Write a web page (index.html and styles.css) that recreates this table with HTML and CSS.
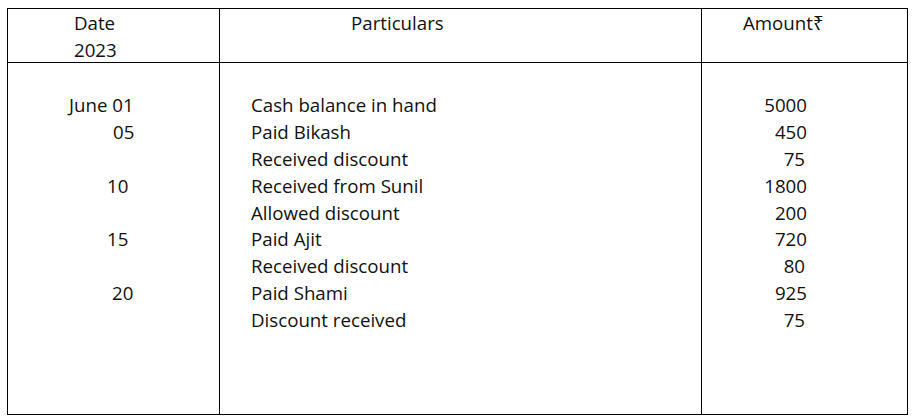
FILE: index.html
```html
<!DOCTYPE html>
<html lang="en">
<head>
<meta charset="utf-8">
<title>Cash Book</title>
<link rel="stylesheet" href="styles.css">
</head>
<body>
<div class="ledger">
  <div class="cell head date-col">
    <div class="line">Date</div>
    <div class="line">2023</div>
  </div>
  <div class="cell head part-col">
    <div class="line">Particulars</div>
  </div>
  <div class="cell head amt-col">
    <div class="line">Amount₹</div>
  </div>

  <div class="cell body date-col">
    <div class="line d-first">June 01</div>
    <div class="line d-05">05</div>
    <div class="line">&nbsp;</div>
    <div class="line d-mid">10</div>
    <div class="line">&nbsp;</div>
    <div class="line d-mid">15</div>
    <div class="line">&nbsp;</div>
    <div class="line d-20">20</div>
  </div>
  <div class="cell body part-col">
    <div class="line">Cash balance in hand</div>
    <div class="line">Paid Bikash</div>
    <div class="line">Received discount</div>
    <div class="line">Received from Sunil</div>
    <div class="line">Allowed discount</div>
    <div class="line">Paid Ajit</div>
    <div class="line">Received discount</div>
    <div class="line">Paid Shami</div>
    <div class="line">Discount received</div>
  </div>
  <div class="cell body amt-col">
    <div class="line num">5000</div>
    <div class="line num">450</div>
    <div class="line num n-short">75</div>
    <div class="line num">1800</div>
    <div class="line num">200</div>
    <div class="line num">720</div>
    <div class="line num n-short">80</div>
    <div class="line num">925</div>
    <div class="line num n-short">75</div>
  </div>
</div>
</body>
</html>
```

FILE: styles.css
```css
html, body {
  margin: 0;
  padding: 0;
  background: #ffffff;
}

body {
  padding: 8px 0 0 7px;
  font-family: "Open Sans", "Noto Sans", sans-serif;
  font-size: 18.7px;
  color: #111111;
}

.ledger {
  display: grid;
  grid-template-columns: 212px 482px 206px;
  grid-template-rows: 54px 351px;
  width: 901px;
  border: 1px solid #000;
  box-sizing: border-box;
}

.cell {
  box-sizing: border-box;
}

.cell.head {
  border-bottom: 1px solid #000;
  padding-top: 1px;
}

.date-col {
  border-right: 1px solid #000;
}

.part-col {
  border-right: 1px solid #000;
}

.line {
  line-height: 26.9px;
  height: 26.9px;
  white-space: nowrap;
}

.head.date-col {
  padding-left: 66px;
}

.head.part-col {
  padding-left: 131px;
}

.head.amt-col {
  padding-left: 41px;
}

.cell.body {
  padding-top: 29px;
}

.body.date-col .d-first { padding-left: 61px; }
.body.date-col .d-05 { padding-left: 105px; }
.body.date-col .d-mid { padding-left: 99px; }
.body.date-col .d-20 { padding-left: 104px; }

.body.part-col {
  padding-left: 31px;
}

.body.amt-col {
  padding-right: 101px;
}

.num {
  text-align: right;
}

.n-short {
  padding-right: 2px;
}
```
